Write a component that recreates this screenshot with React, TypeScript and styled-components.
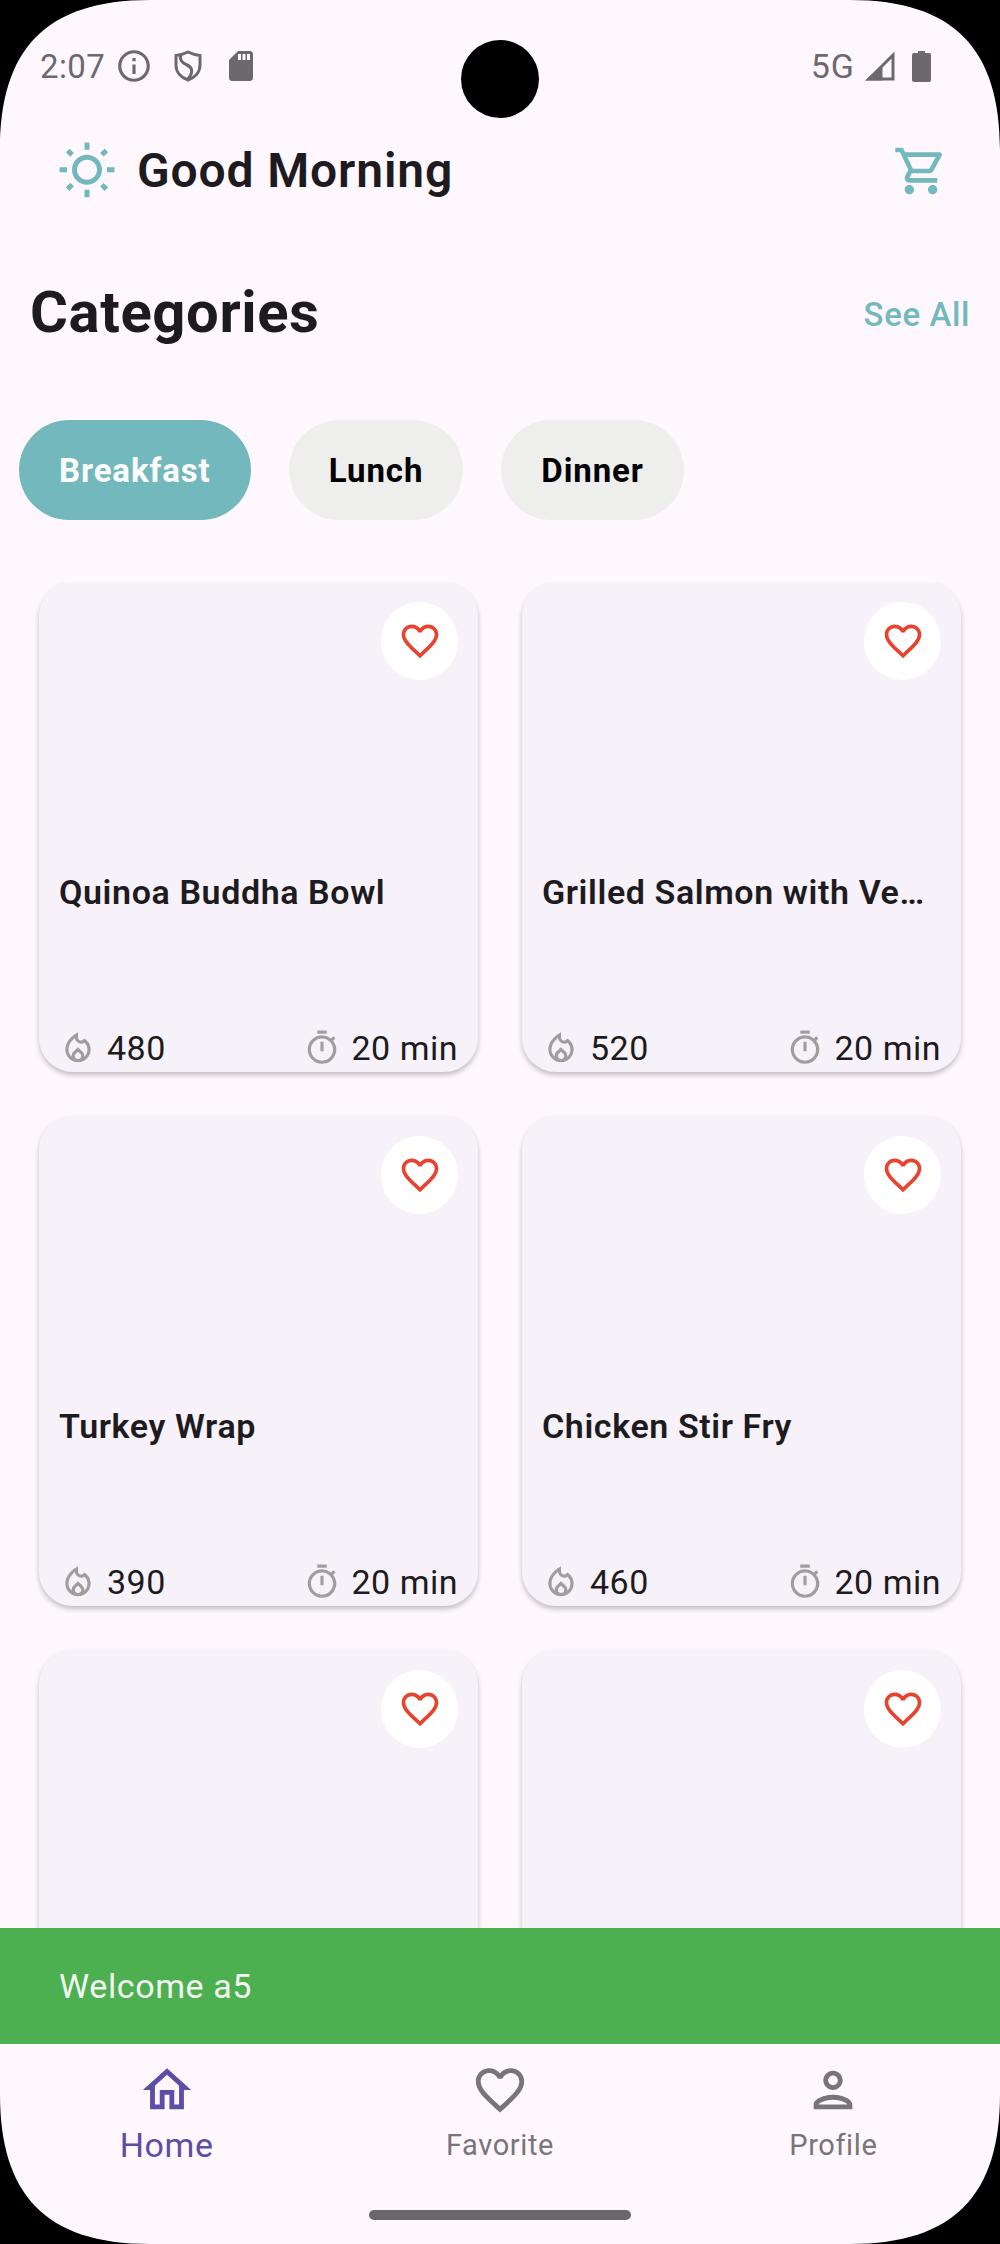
import React from "react";
import styled, { createGlobalStyle } from "styled-components";
import {
  MdFavoriteBorder,
  MdInfoOutline,
  MdOutlineHome,
  MdOutlineLocalFireDepartment,
  MdOutlinePerson,
  MdOutlineShoppingCart,
  MdOutlineTimer,
  MdOutlineWbSunny,
  MdSdCard,
} from "react-icons/md";

const GlobalStyle = createGlobalStyle`
  html, body {
    margin: 0;
    padding: 0;
    background: #000;
  }
  * {
    box-sizing: border-box;
  }
`;

const Screen = styled.div`
  position: relative;
  width: 1000px;
  height: 2244px;
  display: flex;
  flex-direction: column;
  background: #fef8fe;
  overflow: hidden;
  font-family: Roboto, "Liberation Sans", sans-serif;
  color: #1d1b20;
`;

const Corner = styled.svg<{ $right?: boolean; $bottom?: boolean }>`
  position: absolute;
  width: 150px;
  height: 150px;
  z-index: 2;
  ${({ $right }) => ($right ? "right: 0;" : "left: 0;")}
  ${({ $bottom }) => ($bottom ? "bottom: 0;" : "top: 0;")}
  transform: scale(${({ $right }) => ($right ? -1 : 1)}, ${({ $bottom }) => ($bottom ? -1 : 1)});
`;

const Camera = styled.div`
  position: absolute;
  top: 40px;
  left: 461px;
  width: 78px;
  height: 78px;
  border-radius: 50%;
  background: #000;
`;

const StatusBar = styled.div`
  flex: none;
  height: 132px;
  display: flex;
  align-items: center;
  justify-content: space-between;
  padding: 0 69px 0 40px;
  color: #6d686e;
`;

const StatusGroup = styled.div<{ $gap: number }>`
  display: flex;
  align-items: center;
  gap: ${({ $gap }) => $gap}px;
`;

const StatusTime = styled.span`
  font-size: 33px;
  letter-spacing: 0.4px;
  margin-right: -11px;
`;

const StatusNet = styled.span`
  font-size: 34px;
  letter-spacing: 1px;
  margin-right: -7px;
`;

const Header = styled.header`
  flex: none;
  height: 76px;
  display: flex;
  align-items: center;
  justify-content: space-between;
  padding: 0 51px 0 57px;
  color: #72b8bd;
  svg {
    margin-top: 2px;
  }
`;

const Greeting = styled.div`
  display: flex;
  align-items: center;
  gap: 20px;
`;

const GreetingText = styled.h1`
  margin: 0;
  font-size: 48px;
  font-weight: 600;
  letter-spacing: 0.85px;
  color: #1d1b20;
`;

const SectionRow = styled.div`
  flex: none;
  height: 72px;
  margin-top: 68px;
  padding: 0 30px;
  display: flex;
  align-items: center;
  justify-content: space-between;
`;

const SectionTitle = styled.h2`
  margin: 0;
  font-size: 58px;
  font-weight: 700;
  letter-spacing: 0.6px;
`;

const SeeAll = styled.span`
  position: relative;
  top: 2px;
  font-size: 33px;
  font-weight: 500;
  letter-spacing: 0.6px;
  color: #72b8bd;
`;

const Chips = styled.div`
  flex: none;
  margin-top: 72px;
  padding-left: 19px;
  display: flex;
  gap: 38px;
`;

const Chip = styled.div<{ $active?: boolean }>`
  height: 100px;
  padding: 0 40px;
  display: flex;
  align-items: center;
  border-radius: 50px;
  font-size: 33px;
  font-weight: 700;
  letter-spacing: 0.9px;
  background: ${({ $active }) => ($active ? "#72b8bd" : "#eeefed")};
  color: ${({ $active }) => ($active ? "#fdfdfd" : "#000")};
`;

const Main = styled.main`
  flex: 1;
  min-height: 0;
  margin-top: 62px;
  overflow: hidden;
`;

const Grid = styled.div`
  display: grid;
  grid-template-columns: 439px 439px;
  gap: 44px;
  padding: 0 39px;
`;

const Card = styled.article`
  position: relative;
  height: 490px;
  padding: 0 20px;
  display: flex;
  flex-direction: column;
  background: #f7f2fa;
  border-radius: 34px;
  box-shadow: 0 3px 5px rgba(0, 0, 0, 0.24);
`;

const HeartBadge = styled.div`
  position: absolute;
  top: 20px;
  right: 20px;
  width: 77px;
  height: 78px;
  border-radius: 50%;
  background: #fff;
  display: flex;
  align-items: center;
  justify-content: center;
  color: #e8432f;
`;

const CardTitle = styled.div`
  margin-top: 290px;
  line-height: 40px;
  font-size: 34px;
  font-weight: 600;
  letter-spacing: 0.6px;
  white-space: nowrap;
  overflow: hidden;
  text-overflow: ellipsis;
`;

const CardFooter = styled.div`
  margin-top: auto;
  height: 48px;
  display: flex;
  align-items: center;
  justify-content: space-between;
`;

const Stat = styled.div`
  display: flex;
  align-items: center;
  gap: 10px;
  font-size: 34px;
  letter-spacing: 0.5px;
  color: #1d1b20;
  svg {
    color: #9e9e9e;
  }
`;

const Snackbar = styled.div`
  flex: none;
  height: 116px;
  padding-left: 59px;
  display: flex;
  align-items: center;
  background: #4caf50;
  color: #f3f6f2;
  font-size: 34px;
  letter-spacing: 0.6px;
`;

const BottomNav = styled.nav`
  flex: none;
  height: 200px;
  display: flex;
  flex-direction: column;
`;

const NavItems = styled.div`
  height: 166px;
  padding-top: 17px;
  display: grid;
  grid-template-columns: repeat(3, 1fr);
`;

const NavItem = styled.div<{ $active?: boolean }>`
  display: flex;
  flex-direction: column;
  align-items: center;
  color: ${({ $active }) => ($active ? "#5c4ea6" : "#79747a")};
`;

const NavLabel = styled.span<{ $active?: boolean }>`
  margin-top: 6px;
  line-height: 40px;
  font-size: ${({ $active }) => ($active ? 34 : 29)}px;
  letter-spacing: 0.6px;
`;

const HomeBar = styled.div`
  width: 262px;
  height: 10px;
  margin: 0 auto;
  border-radius: 5px;
  background: #6b666b;
`;

const ScreenCorner = ({ right, bottom }: { right?: boolean; bottom?: boolean }) => (
  <Corner $right={right} $bottom={bottom} viewBox="0 0 150 150">
    <path d="M0 0 H150 C45 0 0 50 0 150 Z" fill="#000" />
  </Corner>
);

const ShieldIcon = () => (
  <svg width="28" height="32" viewBox="0 0 28 32" fill="none" stroke="currentColor" strokeWidth="3">
    <path d="M14 2 C18 4 22 5 26 5.5 V15 C26 23 20 28 14 30 C8 28 2 23 2 15 V5.5 C6 5 10 4 14 2 Z" />
    <path d="M7 4 C5 9 8 13 13 15 C18 17 20 22 14 29" />
  </svg>
);

const SignalIcon = () => (
  <svg width="30" height="30" viewBox="0 0 30 30" fill="none" stroke="currentColor" strokeWidth="3">
    <path d="M28 4 V28 H4 Z" />
    <path d="M4 28 L16 17 V28 Z" fill="currentColor" />
  </svg>
);

const BatteryIcon = () => (
  <svg width="19" height="31" viewBox="0 0 19 31" fill="currentColor">
    <path d="M6 0 H13 V2 H17 A2 2 0 0 1 19 4 V29 A2 2 0 0 1 17 31 H2 A2 2 0 0 1 0 29 V4 A2 2 0 0 1 2 2 H6 Z" />
  </svg>
);

// the third row sits behind the snackbar, only its top shows
const meals: { id: number; title?: string; calories?: number }[] = [
  { id: 1, title: "Quinoa Buddha Bowl", calories: 480 },
  { id: 2, title: "Grilled Salmon with Vegetables", calories: 520 },
  { id: 3, title: "Turkey Wrap", calories: 390 },
  { id: 4, title: "Chicken Stir Fry", calories: 460 },
  { id: 5 },
  { id: 6 },
];

export default function App() {
  return (
    <>
      <GlobalStyle />
      <Screen>
        <ScreenCorner />
        <ScreenCorner right />
        <ScreenCorner bottom />
        <ScreenCorner right bottom />
        <Camera />
        <StatusBar>
          <StatusGroup $gap={21}>
            <StatusTime>2:07</StatusTime>
            <MdInfoOutline size={38} />
            <ShieldIcon />
            <MdSdCard size={36} />
          </StatusGroup>
          <StatusGroup $gap={17}>
            <StatusNet>5G</StatusNet>
            <SignalIcon />
            <BatteryIcon />
          </StatusGroup>
        </StatusBar>

        <Header>
          <Greeting>
            <MdOutlineWbSunny size={60} />
            <GreetingText>Good Morning</GreetingText>
          </Greeting>
          <MdOutlineShoppingCart size={56} />
        </Header>

        <SectionRow>
          <SectionTitle>Categories</SectionTitle>
          <SeeAll>See All</SeeAll>
        </SectionRow>

        <Chips>
          <Chip $active>Breakfast</Chip>
          <Chip>Lunch</Chip>
          <Chip>Dinner</Chip>
        </Chips>

        <Main>
          <Grid>
            {meals.map((meal) => (
              <Card key={meal.id}>
                <HeartBadge>
                  <MdFavoriteBorder size={44} />
                </HeartBadge>
                {meal.title && (
                  <>
                    <CardTitle>{meal.title}</CardTitle>
                    <CardFooter>
                      <Stat>
                        <MdOutlineLocalFireDepartment size={38} />
                        {meal.calories}
                      </Stat>
                      <Stat>
                        <MdOutlineTimer size={38} />
                        20 min
                      </Stat>
                    </CardFooter>
                  </>
                )}
              </Card>
            ))}
          </Grid>
        </Main>

        <Snackbar>Welcome a5</Snackbar>

        <BottomNav>
          <NavItems>
            <NavItem $active>
              <MdOutlineHome size={58} />
              <NavLabel $active>Home</NavLabel>
            </NavItem>
            <NavItem>
              <MdFavoriteBorder size={58} />
              <NavLabel>Favorite</NavLabel>
            </NavItem>
            <NavItem>
              <MdOutlinePerson size={58} />
              <NavLabel>Profile</NavLabel>
            </NavItem>
          </NavItems>
          <HomeBar />
        </BottomNav>
      </Screen>
    </>
  );
}
